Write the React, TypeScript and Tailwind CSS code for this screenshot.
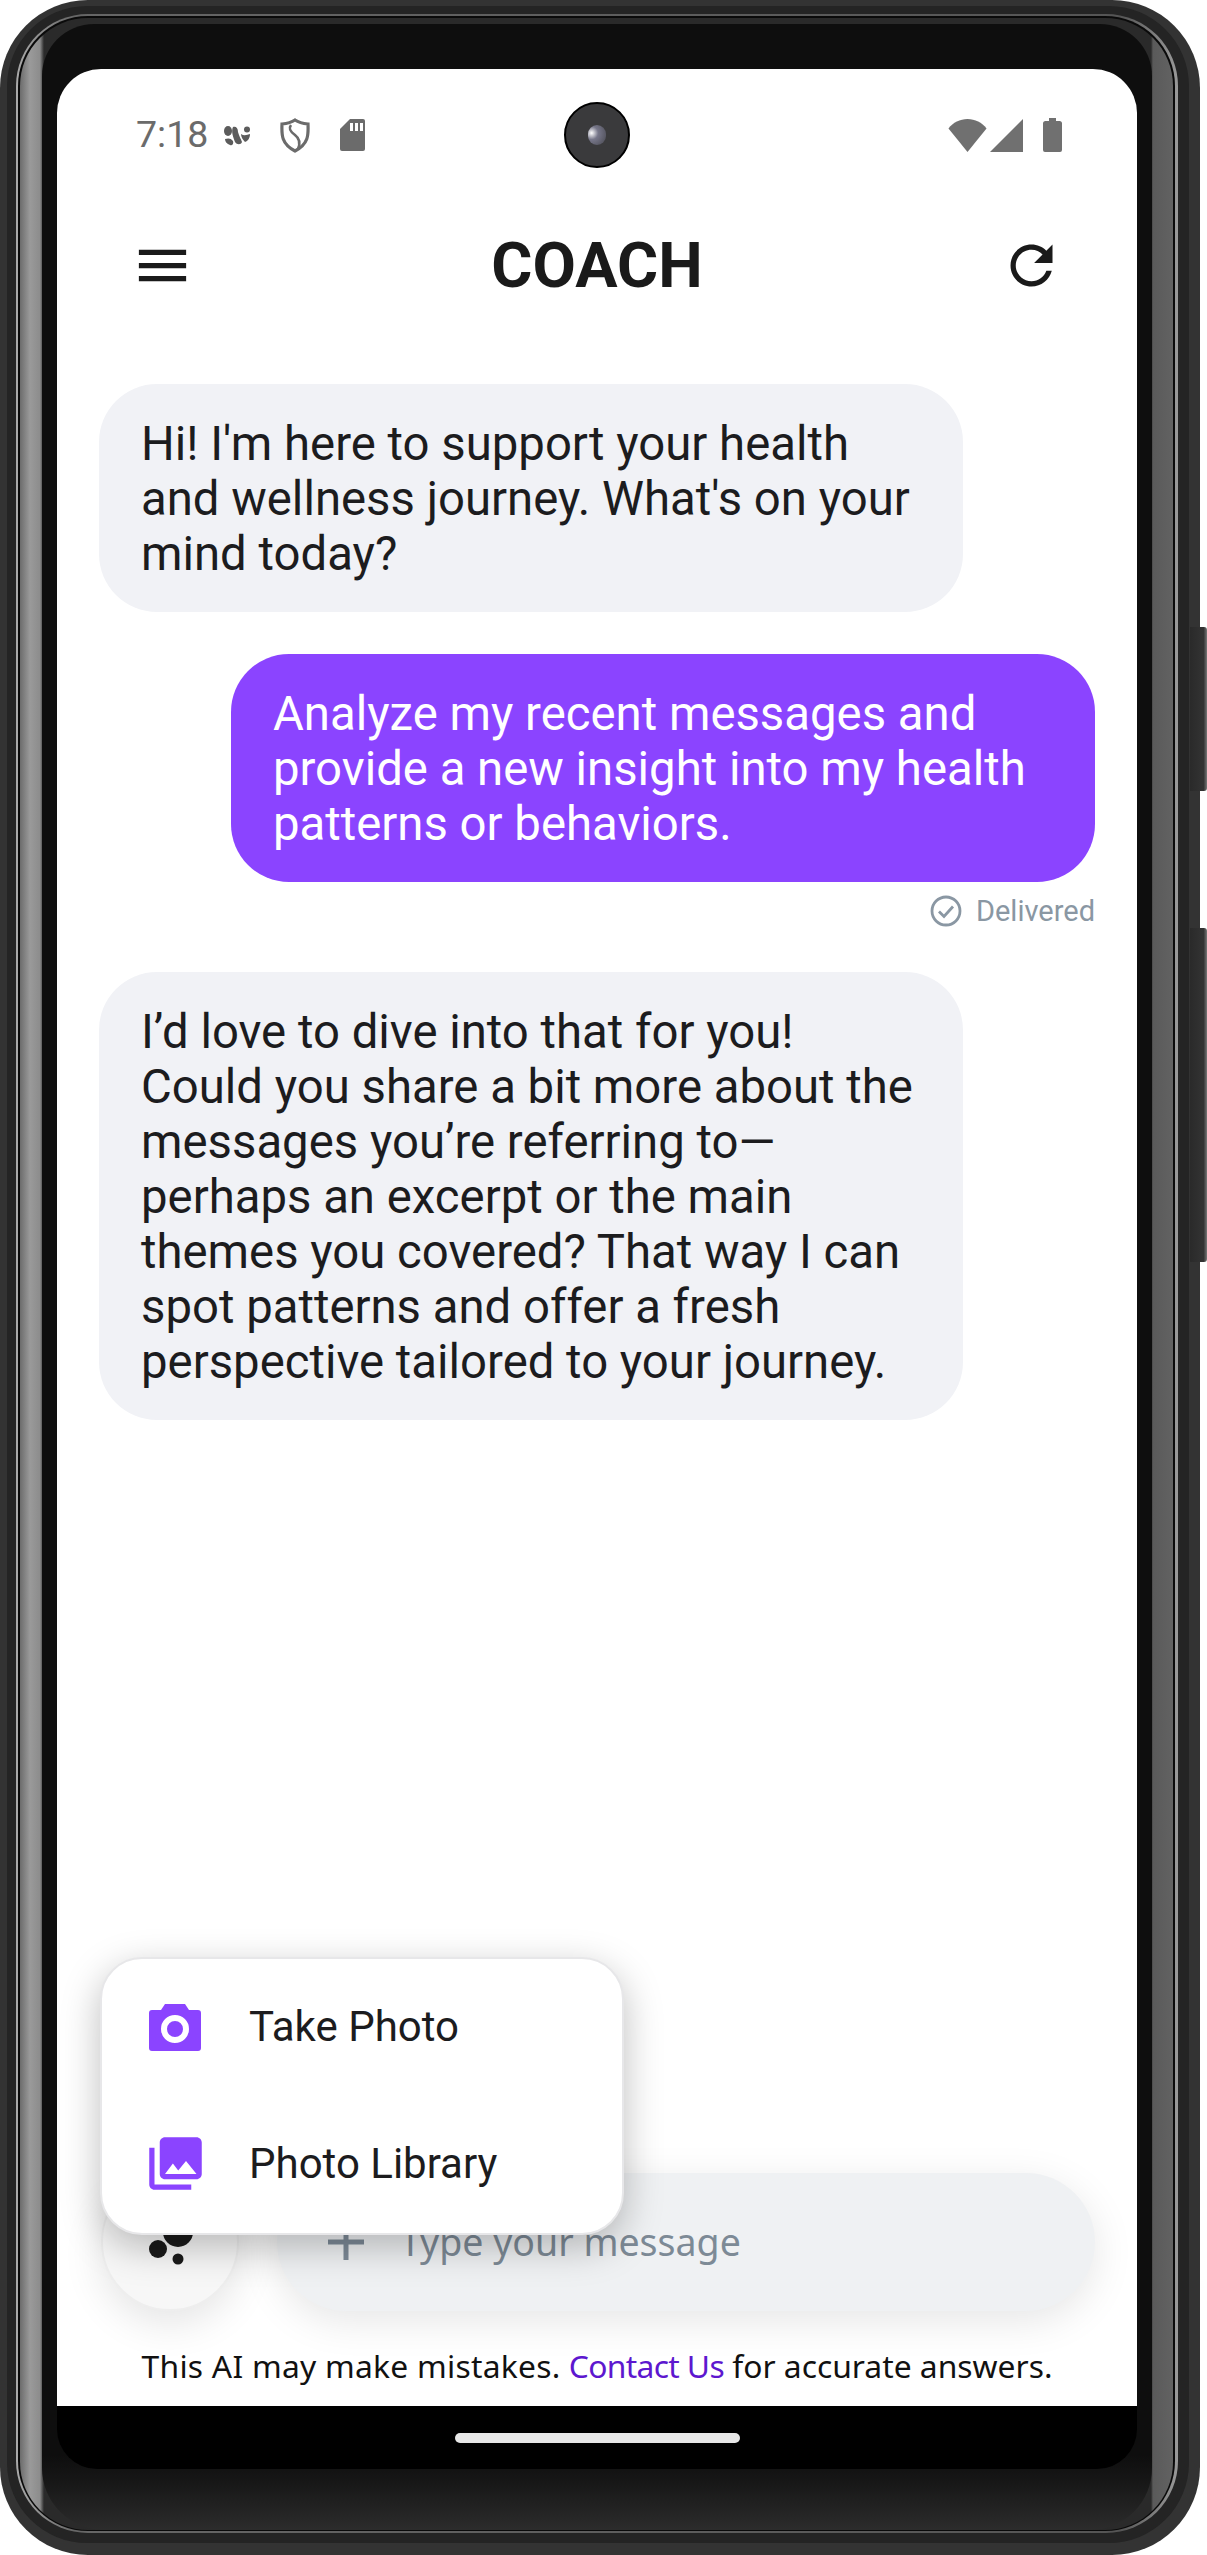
import React from "react";

const greeting = ["Hi! I'm here to support your health", "and wellness journey. What's on your", "mind today?"];
const question = ["Analyze my recent messages and", "provide a new insight into my health", "patterns or behaviors."];
const answer = [
  "I’d love to dive into that for you!",
  "Could you share a bit more about the",
  "messages you’re referring to—",
  "perhaps an excerpt or the main",
  "themes you covered? That way I can",
  "spot patterns and offer a fresh",
  "perspective tailored to your journey.",
];

function Bubble({ lines, mine }: { lines: string[]; mine?: boolean }) {
  return (
    <div
      className={
        mine
          ? "self-end w-[864px] rounded-[58px] bg-[#8b44ff] px-[42px] pt-[33px] pb-[30px] text-[47.3px] leading-[55px] text-white"
          : "self-start w-[864px] rounded-[58px] bg-[#f1f2f6] px-[42px] pt-[33px] pb-[30px] text-[47.3px] leading-[55px] text-[#1c1c1e]"
      }
    >
      {lines.map((l) => (
        <div key={l} className="whitespace-nowrap">
          {l}
        </div>
      ))}
    </div>
  );
}

function StatusBar() {
  return (
    <div className="flex items-center justify-between pl-[79px] pr-[75px] pt-[33px] h-[99px]">
      <div className="flex items-center w-[229px]">
        <span className="text-[37.5px] leading-none text-[#6b6b6b] w-[88px]">7:18</span>
        <svg width="26" height="20" viewBox="0 0 26 20" className="shrink-0 mt-[2px]" fill="#5c5c5c">
          <ellipse cx="4" cy="5" rx="4" ry="5" />
          <path d="M1 13c3-1 6-1 8 2 1 3-1 5-3 4-3-1-5-3-5-6z" />
          <path d="M9 1c3-1 5 1 5 5 1 4 3 7 4 10-1 3-5 3-7 0-2-5-4-11-2-15z" />
          <circle cx="23" cy="3.5" r="3" />
          <path d="M17 8c3 2 6 1 9 0 0 4-2 7-5 8-2-2-4-5-4-8z" />
        </svg>
        <svg width="30" height="35" viewBox="0 0 30 35" className="shrink-0 ml-[30px]" fill="none" stroke="#6b6b6b" strokeWidth="3.2">
          <path d="M15 2c3 2 8 3.500 13 4 .5 11 .5 20-13 27C1.500 26 1.500 17 2 6c5-.5 10-2 13-4z" />
          <path d="M11 7c-3 4 0 7 4 10s6 7 3 14" strokeWidth="2.6" />
        </svg>
        <svg width="25" height="32" viewBox="0 0 25 32" className="shrink-0 ml-[30px]">
          <path fill="#6b6b6b" d="M10 0h13a2 2 0 0 1 2 2v28a2 2 0 0 1-2 2H2a2 2 0 0 1-2-2V10z" />
          <path fill="#fff" d="M10 4h3v8h-3zM15 4h3v8h-3zM20 4h3v8h-3z" />
        </svg>
      </div>
      <div className="w-[66px] h-[66px] rounded-full border-[2px] border-black bg-[#3a3a3c] flex items-center justify-center shrink-0">
        <div className="w-[18px] h-[20px] rounded-full bg-[radial-gradient(circle_at_20%_40%,#fff_0,#77778a_35%,#47474f_100%)]" />
      </div>
      <div className="flex items-center w-[233px] justify-end">
        <svg width="39" height="33" viewBox="0 0 39 33" className="shrink-0">
          <path fill="#707070" d="M19.500 33 .5 9.500C5 3.500 12 0 19.500 0S34 3.500 38.500 9.500z" />
        </svg>
        <svg width="33" height="33" viewBox="0 0 33 33" className="shrink-0 ml-[3px]">
          <path fill="#707070" d="M33 0v33H0z" />
        </svg>
        <svg width="19" height="34" viewBox="0 0 19 34" className="shrink-0 ml-[20px]">
          <path fill="#707070" d="M6 0h7v3h3.500A2.500 2.500 0 0 1 19 5.500V32a2 2 0 0 1-2 2H2a2 2 0 0 1-2-2V5.500A2.500 2.500 0 0 1 2.500 3H6z" />
        </svg>
      </div>
    </div>
  );
}

function Header() {
  return (
    <div className="flex items-center justify-between h-[80px] mt-[57px] pl-[74px] pr-[74px]">
      <svg width="63" height="63" viewBox="0 0 24 24" fill="#1a1a1a">
        <path d="M3 18h18v-2H3v2zm0-5h18v-2H3v2zm0-7v2h18V6H3z" />
      </svg>
      <h1 className="text-[63px] leading-none font-bold text-[#1a1a1a]">COACH</h1>
      <svg width="63" height="63" viewBox="0 0 24 24" fill="#1a1a1a">
        <path d="M17.650 6.350C16.200 4.900 14.210 4 12 4c-4.420 0-7.990 3.580-7.990 8s3.570 8 7.990 8c3.730 0 6.840-2.550 7.730-6h-2.080c-.82 2.330-3.040 4-5.650 4-3.310 0-6-2.690-6-6s2.690-6 6-6c1.660 0 3.140.69 4.220 1.780L13 11h7V4l-2.350 2.350z" />
      </svg>
    </div>
  );
}

function PhotoMenu() {
  return (
    <div className="absolute left-[43px] bottom-[76px] z-10 w-[524px] h-[278px] rounded-[42px] border-[2px] border-[#e7e7e9] bg-white shadow-[0_12px_38px_rgba(0,0,0,0.26)] flex flex-col pl-[47px] pt-[43px]">
      <div className="flex items-center h-[50px]">
        <svg width="52" height="47" viewBox="0 0 52 47" className="shrink-0">
          <path
            fill="#8b44ff"
            fillRule="evenodd"
            d="M16 0h20l4 6h9a3 3 0 0 1 3 3v35a3 3 0 0 1-3 3H3a3 3 0 0 1-3-3V9a3 3 0 0 1 3-3h9zM26 11a14 14 0 1 0 0 28 14 14 0 0 0 0-28zm0 6a8 8 0 1 1 0 16 8 8 0 0 1 0-16z"
          />
        </svg>
        <span className="ml-[48px] text-[42px] leading-none text-[#1c1c1e]">Take Photo</span>
      </div>
      <div className="flex items-center h-[63px] mt-[80px]">
        <svg width="63" height="63" viewBox="0 0 24 24" fill="#8b44ff" className="shrink-0 -ml-[5px]">
          <path d="M22 16V4c0-1.100-.9-2-2-2H8c-1.100 0-2 .9-2 2v12c0 1.100.9 2 2 2h12c1.100 0 2-.9 2-2zm-11-4l2.030 2.710L16 11l4 5H8l3-4zM2 6v14c0 1.100.9 2 2 2h14v-2H4V6H2z" />
        </svg>
        <span className="ml-[42px] text-[42px] leading-none text-[#1c1c1e]">Photo Library</span>
      </div>
    </div>
  );
}

function Composer() {
  return (
    <div className="relative flex items-center gap-[38px] pl-[44px] pr-[42px]">
      <PhotoMenu />
      <div className="relative w-[138px] h-[138px] rounded-full bg-[#f7f7f7] border-[2px] border-[#eeeeee] shadow-[0_12px_40px_rgba(0,0,0,0.11)] shrink-0">
        <svg width="60" height="50" viewBox="0 0 60 50" className="absolute left-[44px] top-[40px]" fill="#1a1a1a">
          <circle cx="31" cy="17" r="15" />
          <circle cx="11" cy="34" r="9" />
          <circle cx="31" cy="44" r="5.500" />
        </svg>
      </div>
      <div className="flex-1 h-[138px] rounded-full bg-[#eff1f3] shadow-[0_10px_40px_rgba(0,0,0,0.1)] flex items-center pl-[51px]">
        <svg width="36" height="36" viewBox="0 0 36 36" fill="#7e8b98" className="shrink-0">
          <path d="M15.500 0h5v15.500H36v5H20.500V36h-5V20.500H0v-5h15.500z" />
        </svg>
        <span className="ml-[36px] font-['Noto_Sans',sans-serif] text-[37.5px] leading-none text-[#7d8a96]">Type your message</span>
      </div>
    </div>
  );
}

function Screen() {
  return (
    <div className="h-[2337px] rounded-t-[44px] bg-white flex flex-col font-['Roboto',sans-serif] overflow-hidden">
      <StatusBar />
      <Header />
      <div className="flex-1 flex flex-col pl-[42px] pr-[42px] mt-[79px]">
        <Bubble lines={greeting} />
        <div className="mt-[42px]">
          <div className="flex flex-col">
            <Bubble lines={question} mine />
            <div className="self-end flex items-center h-[30px] mt-[14px]">
              <svg width="32" height="32" viewBox="0 0 32 32" fill="none" stroke="#8a97a3" strokeWidth="2.800" className="shrink-0">
                <circle cx="16" cy="16" r="14" />
                <path d="M9 16.500l5 5 9-10" />
              </svg>
              <span className="ml-[14px] text-[29px] leading-none text-[#8a97a3]">Delivered</span>
            </div>
          </div>
        </div>
        <div className="mt-[46px]">
          <Bubble lines={answer} />
        </div>
      </div>
      <Composer />
      <div className="h-[95px] pt-[33px] text-center font-['Noto_Sans',sans-serif] text-[31.8px] leading-[44px] text-[#111]">
        <span className="tracking-[0.25px]">This AI may make mistakes.</span>{" "}
        <span className="text-[#5d17cf] tracking-[-0.65px]">Contact Us</span> for accurate answers.
      </div>
    </div>
  );
}

export default function App() {
  return (
    <div className="flex w-[1207px] h-[2555px] bg-white overflow-hidden">
      <div className="w-[1200px] h-full shrink-0 rounded-[88px] bg-[#333333] pl-[7px] pr-[11px] pt-[6px] pb-[12px]">
        <div className="h-full rounded-[80px] bg-[#242424] pl-[9px] pr-[11px] pt-[8px] pb-[10px]">
          <div className="h-full rounded-[72px] bg-[linear-gradient(90deg,#aaaaaa_0,#666666_5%,#555555_95%,#999999_100%)] pl-[2px] pr-[3px] pt-[2px] pb-[2px]">
            <div className="h-full rounded-[70px] bg-[#0a0a0a] pl-[2px] pr-[2px] pt-[2px] pb-[1px]">
              <div className="h-full rounded-[68px] bg-[linear-gradient(90deg,#6c6c6c_0,#9a9a9a_10px,#8c8c8c_20px,#2a2a2a_24px,#2a2a2a_calc(100%-22px),#5a5a5a_calc(100%-20px),#626262_100%)] pl-[22px] pr-[21px] pt-[6px]">
                <div className="h-full rounded-t-[52px] rounded-b-[62px] bg-[linear-gradient(180deg,#0e0e0e_0,#0e0e0e_97%,#161616_98%,#2c2c2c_100%)] px-[15px] pt-[45px]">
                  <Screen />
                  <div className="h-[63px] rounded-b-[40px] bg-black flex justify-center pt-[27px]">
                    <div className="w-[285px] h-[10px] rounded-full bg-[#e8e8e8]" />
                  </div>
                </div>
              </div>
            </div>
          </div>
        </div>
      </div>
      <div className="w-[17px] -ml-[10px] shrink-0 flex flex-col pt-[627px]">
        <div className="h-[164px] rounded-r-[3px] bg-[linear-gradient(90deg,#2a2a2a,#333_80%,#777)]" />
        <div className="h-[334px] mt-[137px] rounded-r-[3px] bg-[linear-gradient(90deg,#2a2a2a,#333_80%,#777)]" />
      </div>
    </div>
  );
}
